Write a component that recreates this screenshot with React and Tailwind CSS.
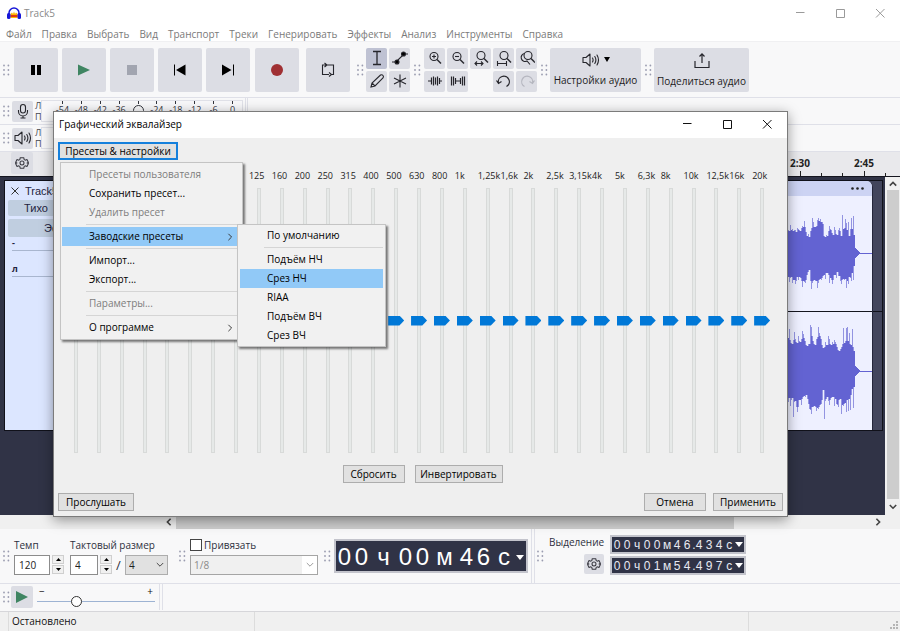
import React from "react";

const MENU = ["Файл", "Правка", "Выбрать", "Вид", "Транспорт", "Треки", "Генерировать", "Эффекты", "Анализ", "Инструменты", "Справка"];

const BANDS = ["20", "25", "31", "40", "50", "63", "80", "100", "125", "160", "200", "250", "315", "400", "500", "630", "800", "1k", "1,25k", "1,6k", "2k", "2,5k", "3,15k", "4k", "5k", "6,3k", "8k", "10k", "12,5k", "16k", "20k"];

const METER = ["-54", "-48", "-42", "-36", "", "-24", "-18", "-12", "-6", "0"];

// Peak heights of each channel, one value per pixel column.
const LEFT_UP = [32, 33, 25, 23, 22, 28, 23, 24, 22, 23, 23, 21, 25, 24, 23, 22, 25, 27, 26, 32, 26, 21, 17, 19, 16, 22, 25, 35, 31, 26, 26, 27, 33, 35, 32, 34, 31, 31, 29, 17, 16, 18, 17, 22, 27, 24, 23, 20, 18, 26, 23, 19, 18, 23, 25, 22, 17, 38, 24, 25, 34, 30, 23, 31, 17, 24, 35, 24, 37, 18];
const LEFT_DOWN = [22, 31, 25, 24, 29, 25, 24, 30, 27, 27, 31, 28, 24, 27, 24, 25, 28, 34, 28, 29, 30, 27, 22, 19, 17, 28, 36, 30, 28, 27, 28, 28, 35, 30, 27, 26, 27, 25, 23, 22, 26, 20, 20, 22, 30, 25, 27, 31, 27, 22, 22, 25, 19, 23, 23, 28, 31, 27, 26, 27, 26, 35, 28, 31, 24, 25, 28, 20, 27, 13];
const RIGHT_UP = [40, 37, 34, 33, 42, 31, 28, 27, 31, 39, 32, 29, 28, 35, 30, 29, 32, 40, 37, 33, 30, 26, 25, 27, 27, 46, 44, 35, 30, 27, 26, 32, 34, 44, 38, 35, 32, 26, 23, 24, 29, 26, 26, 35, 32, 27, 26, 29, 27, 31, 29, 27, 24, 21, 20, 22, 24, 27, 43, 28, 30, 43, 44, 30, 38, 27, 26, 42, 24, 20];
const RIGHT_DOWN = [29, 27, 37, 31, 27, 35, 29, 27, 46, 31, 30, 36, 41, 36, 29, 29, 34, 28, 26, 25, 26, 24, 28, 33, 38, 39, 43, 36, 36, 35, 36, 40, 37, 38, 36, 34, 33, 29, 19, 48, 30, 28, 26, 30, 34, 29, 27, 26, 26, 35, 28, 33, 34, 36, 29, 28, 43, 34, 35, 33, 32, 41, 29, 40, 28, 39, 24, 18, 37, 16];

function Grip() {
  return (
    <svg width="8" height="12" viewBox="0 0 8 12" className="shrink-0 text-[#9a9cb0]" fill="currentColor" aria-hidden="true">
      <circle cx="2" cy="1.5" r="0.9" /><circle cx="6.4" cy="1.5" r="0.9" />
      <circle cx="2" cy="6" r="0.9" /><circle cx="6.4" cy="6" r="0.9" />
      <circle cx="2" cy="10.5" r="0.9" /><circle cx="6.4" cy="10.5" r="0.9" />
    </svg>
  );
}

function Big({ label, children, className = "" }) {
  return (
    <button aria-label={label} className={`flex size-11 shrink-0 items-center justify-center rounded-xs bg-[#dcdde4] ${className}`}>
      <svg width="16" height="16" viewBox="0 0 16 16" fill="none">{children}</svg>
    </button>
  );
}

function Small({ label, active, children }) {
  return (
    <button aria-label={label} className={`flex size-[21px] shrink-0 items-center justify-center rounded-xs ${active ? "bg-[#bfc2d3]" : "bg-[#dcdde4]"}`}>
      <svg width="16" height="16" viewBox="0 0 16 16" fill="none" stroke="#26262c" strokeWidth="1.1">{children}</svg>
    </button>
  );
}

function Gear() {
  return (
    <svg width="14" height="14" viewBox="0 0 24 24" fill="none" stroke="#3a3a42" strokeWidth="1.8" strokeLinejoin="round" aria-hidden="true">
      <path d="M9 3h6l.8 3.2 1.600.9 3.100-1L23 11l-2.300 1L23 13l-2.500 4.900-3.100-1-1.600.9L15 21H9l-.8-3.200-1.600-.9-3.100 1L1 13l2.300-1L1 11l2.500-4.900 3.100 1 1.600-.9z" />
      <circle cx="12" cy="12" r="3.400" />
    </svg>
  );
}

function Speaker() {
  return (
    <svg width="18" height="16" viewBox="0 0 18 16" fill="none" stroke="#26262c" strokeWidth="1.1" strokeLinecap="round" aria-hidden="true">
      <path d="M1 5.500h3l4-3.500v12l-4-3.500H1z" strokeLinejoin="round" />
      <path d="M10.500 6q1.200 2 0 4M12.800 4.500q2.200 3.500 0 7M15 3q3 5 0 10" />
    </svg>
  );
}

function Chevron({ dir = "down", color = "#444", size = 8, weight = 1.2 }) {
  const paths = { down: "M1 2.500 5 6.500 9 2.500", up: "M1 7 5 3 9 7", left: "M7 1 3 5 7 9", right: "M3 1 7 5 3 9" };
  return (
    <svg width={size} height={size} viewBox="0 0 10 10" fill="none" stroke={color} strokeWidth={weight} className="shrink-0" aria-hidden="true">
      <path d={paths[dir]} />
    </svg>
  );
}

function WindowButtons({ color }) {
  return (
    <div className="flex items-center gap-[30px]">
      <button aria-label="Свернуть"><svg width="10" height="10" viewBox="0 0 10 10" stroke={color}><path d="M1 4.500h8.500" /></svg></button>
      <button aria-label="Развернуть"><svg width="10" height="10" viewBox="0 0 10 10" stroke={color} fill="none"><path d="M1.500 1.500h8v8h-8z" /></svg></button>
      <button aria-label="Закрыть"><svg width="10" height="10" viewBox="0 0 10 10" stroke={color}><path d="M1 1l8.500 8.500M9.500 1 1 9.500" /></svg></button>
    </div>
  );
}

function Lens({ cx = 8, cy = 6.5, r = 4 }) {
  return <><circle cx={cx} cy={cy} r={r} /><path d={`M${cx + 3} ${cy + 3}l4 4`} strokeWidth="1.4" /></>;
}

function Toolbar() {
  return (
    <div className="flex h-14 items-center border-b border-[#dfe0e8] pl-0.5">
      <Grip />
      <div className="ml-1 flex gap-1">
        <Big label="Пауза"><path d="M3 3h4v10H3zM9 3h4v10H9z" fill="#000" /></Big>
        <Big label="Воспроизвести"><path d="M2 2.500 14 8 2 13.500z" fill="#3f8562" /></Big>
        <Big label="Остановить"><path d="M3 3h10v10H3z" fill="#a2a5b0" /></Big>
        <Big label="К началу"><path d="M2.500 2.500v11" stroke="#000" /><path d="M13.500 2.500v11L4 8z" fill="#000" /></Big>
        <Big label="К концу"><path d="M13.500 2.500v11" stroke="#000" /><path d="M2 2.500v11L11.500 8z" fill="#000" /></Big>
      </div>
      <Big label="Запись" className="ml-[5px]"><circle cx="8" cy="8" r="6" fill="#a03033" /></Big>
      <Big label="Цикл" className="mr-1 ml-[7px]">
        <path d="M6 3H2.500v9.500H9M7 3h6.500v9.500H12M4.500 1l2.500 2-2.500 2M9 10.500l2.500 2L9 14.500" stroke="#26262c" strokeWidth="1.1" />
      </Big>
      <div className="ml-0.5"><Grip /></div>
      <div className="ml-0.5 grid grid-cols-2 gap-0.5">
        <Small label="Выделение" active><path d="M4 1.500h8M4 14.500h8M8 1.500v13" strokeWidth="1.3" /></Small>
        <Small label="Огибающая"><path d="M0 12h4l8-8h4" strokeWidth="1.2" /><circle cx="5" cy="12" r="2" fill="#000" /><circle cx="11.500" cy="4" r="2" fill="#000" /></Small>
        <Small label="Карандаш"><path d="M2 14l1-4 8.500-8q1.500-.8 2.500.5t0 2.300L6 13zM3 10l3 3" /></Small>
        <Small label="Мультиинструмент"><path d="M8 1.500v13M2 5l12 6M14 5 2 11" /></Small>
      </div>
      <div className="ml-[3px]"><Grip /></div>
      <div className="ml-[3px] grid grid-cols-5 gap-0.5">
        <Small label="Увеличить"><Lens cx={7} /><path d="M5 6.500h4M7 4.500v4" /></Small>
        <Small label="Уменьшить"><Lens cx={7} /><path d="M5 6.500h4" /></Small>
        <Small label="По выделению"><Lens cx={8} cy={5.5} /><path d="M2 13.500h8M4 11.500l-2 2 2 2M8 11.500l2 2-2 2" /></Small>
        <Small label="По ширине"><Lens cx={8} cy={5.5} /><path d="M1.500 13.500h9M1.500 11v5M10.500 11v5" /></Small>
        <Small label="Переключить масштаб"><Lens cx={9} cy={5.5} /><path d="M5.500 3.500A4 4 0 1 0 8 11l3 3.500" /></Small>
        <Small label="Обрезать"><path d="M1 8h3M12 8h3M4.500 4.500v7M6.500 3.500v9M8.500 4.500v7M10.500 3.500v9M12.500 5v6" strokeWidth="1.2" /></Small>
        <Small label="Тишина"><path d="M1.500 3.500v9M3.500 3.500v9M5.500 5v6M5.500 8h5M10.500 5v6M12.500 3.500v9M14.500 3.500v9" strokeWidth="1.2" /></Small>
        <span />
        <Small label="Отменить"><path d="M2.500 10A5.500 5.500 0 1 1 10.500 13.500M.5 7.500 2.500 10.500l3-2" strokeWidth="1.2" /></Small>
        <Small label="Повторить"><g stroke="#b5b6bf"><path d="M13.500 10A5.500 5.500 0 1 0 5.500 13.500M15.500 7.500 13.500 10.500l-3-2" strokeWidth="1.2" /></g></Small>
      </div>
      <div className="ml-[3px]"><Grip /></div>
      <button className="ml-0.5 flex h-11 w-[91px] shrink-0 flex-col items-center justify-between rounded-xs bg-[#dcdde4] pt-1 pb-[5px] text-[10px]/[13px] whitespace-nowrap text-[#1c1c22]">
        <span className="flex items-center gap-1"><Speaker /><svg width="6" height="5" viewBox="0 0 6 5"><path d="M0 0h6L3 5z" /></svg></span>
        Настройки аудио
      </button>
      <div className="ml-[3px]"><Grip /></div>
      <button className="ml-0.5 flex h-11 w-[95px] shrink-0 flex-col items-center justify-between rounded-xs bg-[#dcdde4] pt-1 pb-1 text-[10px]/[13px] whitespace-nowrap text-[#1c1c22]">
        <svg width="16" height="18" viewBox="0 0 16 18" fill="none" stroke="#26262c" strokeWidth="1.2"><path d="M1 9v6.500h14V9M8 11V2M5.500 4.500 8 1.800l2.500 2.700" /></svg>
        Поделиться аудио
      </button>
    </div>
  );
}

function MeterRow({ icon, label, children }) {
  return (
    <div className="flex h-[27px] items-center border-b border-[#dfe0e8] pl-0.5">
      <Grip />
      <button aria-label={label} className="ml-0.5 flex size-[21px] items-center justify-center rounded-xs bg-[#dcdde4]">{icon}</button>
      <div className="ml-0.5 flex w-[6px] flex-col text-[9px]/[11px] text-[#44464f]"><span>Л</span><span>П</span></div>
      {children}
    </div>
  );
}

function Meters() {
  return (
    <>
      <MeterRow label="Уровень записи" icon={
        <svg width="14" height="16" viewBox="0 0 14 16" fill="none" stroke="#26262c" strokeWidth="1.1"><rect x="4.500" y="1.500" width="5" height="8.500" rx="2.500" /><path d="M2.500 7v1.500a4.500 4.500 0 0 0 9 0V7M7 13v2M4.500 15h5" /></svg>
      }>
        <div className="grid h-[22px] w-[202px] grid-cols-10 border border-[#e0e1e8] bg-[#f8f8fa] pl-[11px] text-[9px]/[11px] text-[#33353d]">
          {METER.map((m, i) => (
            <div key={i} className="flex flex-col items-center">
              <span className="h-[3px] w-px shrink-0 bg-[#33353d]" />
              {m ? <span>{m}</span> : <span className="mt-px size-[11px] shrink-0 rounded-full border border-[#33353d]" />}
            </div>
          ))}
        </div>
        <div className="ml-0.5 h-full w-[3px] border-x border-[#dfe0e8]" />
      </MeterRow>
      <MeterRow label="Уровень воспроизведения" icon={<Speaker />}>
        <div className="h-[22px] w-[202px] border border-[#e0e1e8]" />
      </MeterRow>
    </>
  );
}

function Ruler() {
  return (
    <div className="flex h-[25px] items-stretch border-b border-[#15161f] bg-[#e9e9ec]">
      <div className="flex w-[53px] items-start pl-[11px]">
        <button aria-label="Параметры шкалы" className="flex size-[22px] items-center justify-center rounded-xs bg-[#dcdde4]"><Gear /></button>
      </div>
      <div className="flex-1" />
      <div className="mr-1 flex h-full">
        {["2:15", "2:30", "2:45"].map((t) => (
          <div key={t} className="flex w-16 flex-col items-center justify-between">
            <span className="mt-1 text-[10px]/[14px] font-bold text-[#222]">{t}</span>
            <svg width="64" height="5" viewBox="0 0 64 5" stroke="#222"><path d="M10.500 2v3M32.500 0v5M53.500 2v3" /></svg>
          </div>
        ))}
      </div>
    </div>
  );
}

const outline = (peaks, mid, sign) => `M0 ${mid}${peaks.map((v, i) => `V${mid + sign * v}H${i + 1}`).join("")}V${mid}Z`;
const trough = (peaks) => peaks.map((v, i) => Math.min(v, peaks[i - 1] ?? v, peaks[i + 1] ?? v));

function Wave({ up, down, height, mid }) {
  return (
    <svg width="91" height={height} viewBox={`0 0 91 ${height}`} className="block" fill="#6363d2" shapeRendering="crispEdges">
      <g transform="translate(4 0)">
        <g opacity="0.65"><path d={outline(up, mid, -1)} /><path d={outline(down, mid, 1)} /></g>
        <path d={outline(trough(up), mid, -1)} />
        <path d={outline(trough(down), mid, 1)} />
        <path d={`M69 ${mid - 7}L75 ${mid}L69 ${mid + 7}Z`} />
      </g>
      <path d={`M78 ${mid + 0.5}H91`} stroke="#6363d2" />
    </svg>
  );
}

function Tracks() {
  return (
    <div className="flex flex-1 bg-[#303346]">
      <div className="min-w-0 flex-1 py-[3px] pr-0.5 pl-1">
        <div className="flex border border-[#10111a] bg-[#42455c]">
          <div className="w-[100px] shrink-0 bg-[#dce6ff] pt-px text-[#1f2440]">
            <div className="flex h-[18px] items-center gap-1.5 px-1.5 font-[Liberation_Sans] text-[11px]">
              <button aria-label="Закрыть трек"><svg width="8" height="8" viewBox="0 0 8 8" stroke="#333"><path d="M.5.5l7 7M7.500.5l-7 7" /></svg></button>
              Track5
            </div>
            <div className="flex flex-col gap-[3px] px-[3px] font-[Liberation_Sans] text-[11px]/[18px]">
              <button className="h-4 rounded-xs bg-[#c0cee0] pl-4 text-left leading-4">Тихо</button>
              <button className="h-[18px] rounded-xs bg-[#c0cee0] pl-9 text-left">Эффекты</button>
            </div>
            <div className="flex flex-col gap-3 px-[7px] text-[9px]/[11px] font-bold">
              <div className="h-[14px] border-b border-[#a9b6cf]">-</div>
              <div className="h-[14px] border-b border-[#a9b6cf]">л</div>
            </div>
          </div>
          <div className="min-w-0 flex-1" />
          <div className="w-[92px] shrink-0 overflow-hidden rounded-tr-md border-r border-[#23253a] bg-[#eef0ff]">
            <div className="flex h-[15px] items-center justify-end bg-[#ccd3f3] pr-2">
              <svg width="13" height="3" viewBox="0 0 13 3" fill="#222"><circle cx="1.500" cy="1.500" r="1.300" /><circle cx="6.500" cy="1.500" r="1.300" /><circle cx="11.500" cy="1.500" r="1.300" /></svg>
            </div>
            <Wave up={LEFT_UP} down={LEFT_DOWN} height={115} mid={57} />
            <div className="h-px bg-[#15161f]" />
            <Wave up={RIGHT_UP} down={RIGHT_DOWN} height={118} mid={59} />
          </div>
          <div className="flex w-[9px] shrink-0 flex-col pt-[130px]"><div className="h-px bg-[#10111a]" /></div>
        </div>
      </div>
      <div className="flex w-[15px] flex-col items-center bg-[#f0f0f0]">
        <div className="flex h-[13px] items-center"><Chevron dir="up" weight={2} /></div>
        <div className="w-3 flex-1 bg-[#cdcdcd]" />
        <div className="flex h-4 items-center"><Chevron dir="down" weight={2} /></div>
      </div>
    </div>
  );
}

function Spinner({ id, value, width }) {
  return (
    <div className="flex gap-0.5">
      <input id={id} defaultValue={value} className={`h-5 border border-[#8c8c8c] bg-white pl-1 text-[10px] text-[#222] ${width}`} />
      <div className="flex flex-col gap-px">
        {["M0 3h5L2.500 0z", "M0 0h5L2.500 3z"].map((d, i) => (
          <button key={i} aria-label={i ? "Уменьшить" : "Увеличить"} className="flex h-[9px] w-3 items-center justify-center border border-[#cfcfcf] bg-[#f0f0f0]">
            <svg width="5" height="3" viewBox="0 0 5 3"><path d={d} /></svg>
          </button>
        ))}
      </div>
    </div>
  );
}

function SmallTime({ text, label }) {
  return (
    <div role="group" aria-label={label} className="flex h-[19px] items-center border-2 border-[#c3c4cc] bg-[#303346] pr-px font-[Liberation_Sans] text-[12px] text-[#e8eaf2]">
      {text.split("").map((c, i) => <span key={i} className={`text-center ${c === "." ? "w-0.5" : "w-[10px]"}`}>{c}</span>)}
      <button aria-label="Формат времени" className="ml-px"><svg width="8" height="5" viewBox="0 0 8 5" fill="#fff"><path d="M0 0h8L4 5z" /></svg></button>
    </div>
  );
}

function BottomBar() {
  const clock = [["00", "ч"], ["00", "м"], ["46", "с"]];
  return (
    <div className="flex h-[55px] items-center border-b border-[#dfe0e8] pl-0.5 text-[10px]/[14px] text-[#2e3040]">
      <Grip />
      <div className="ml-1 flex flex-col gap-[3px]">
        <label htmlFor="tempo">Темп</label>
        <Spinner id="tempo" value="120" width="w-9" />
      </div>
      <div className="ml-1.5 flex flex-col gap-[3px]">
        <label htmlFor="beats" className="whitespace-nowrap">Тактовый размер</label>
        <div className="flex items-center">
          <Spinner id="beats" value="4" width="w-7" />
          <span className="w-[13px] text-center text-[13px]">/</span>
          <div className="relative">
            <select aria-label="Доля" className="block h-5 w-[43px] appearance-none border border-[#adadad] bg-[#e1e1e1] pl-[3px] text-[10px] text-[#222]"><option>4</option></select>
            <span className="pointer-events-none absolute top-[6px] right-1"><Chevron /></span>
          </div>
        </div>
      </div>
      <div className="ml-2.5"><Grip /></div>
      <div className="ml-1 flex flex-col gap-[3px]">
        <label className="flex items-center gap-0.5 whitespace-nowrap"><input type="checkbox" className="size-3 appearance-none border border-[#444] bg-white" />Привязать</label>
        <div className="relative">
          <select disabled aria-label="Привязка" className="block h-5 w-32 appearance-none border border-[#a5a5a5] bg-[#f0f0f0] pl-[3px] text-[10px] text-[#8a8a8a] opacity-100"><option>1/8</option></select>
          <span className="pointer-events-none absolute top-px right-px flex h-[18px] w-[15px] items-center justify-center bg-white"><Chevron color="#999" /></span>
        </div>
      </div>
      <div className="ml-[5px]"><Grip /></div>
      <div role="group" aria-label="Время" className="ml-[3px] flex h-[34px] w-[194px] shrink-0 items-center border-2 border-[#c3c4cc] bg-[#303346] pt-0.5 font-[Liberation_Sans] text-2xl text-white">
        {clock.map(([n, u]) => (
          <React.Fragment key={u}>
            {n.split("").map((d, i) => <span key={i} className="w-[17px] text-center">{d}</span>)}
            <span className="w-[27px] text-center last-of-type:w-6">{u}</span>
          </React.Fragment>
        ))}
        <button aria-label="Формат времени"><svg width="8" height="5" viewBox="0 0 8 5" fill="#fff"><path d="M0 0h8L4 5z" /></svg></button>
      </div>
      <div className="ml-[3px] h-full w-1 border-x border-[#dfe0e8]" />
      <div className="ml-px"><Grip /></div>
      <div className="ml-[5px] flex flex-col items-end gap-[5px] pb-1">
        <span>Выделение</span>
        <button aria-label="Настройки выделения" className="flex size-5 items-center justify-center rounded-xs bg-[#dcdde4]"><Gear /></button>
      </div>
      <div className="ml-1.5 flex flex-col gap-0.5 pb-0.5">
        <SmallTime label="Начало выделения" text="00ч00м46.434с" />
        <SmallTime label="Конец выделения" text="00ч01м54.497с" />
      </div>
    </div>
  );
}

function SpeedBar() {
  return (
    <div className="flex h-7 items-center border-b border-[#d6d6da] pb-px pl-0.5">
      <Grip />
      <button aria-label="Воспроизвести с заданной скоростью" className="ml-px flex size-[22px] items-center justify-center rounded-xs bg-[#dcdde4]">
        <svg width="14" height="14" viewBox="0 0 14 14"><path d="M1 1l12 6-12 6z" fill="#3f8562" /></svg>
      </button>
      <div className="ml-1 flex w-[118px] flex-col">
        <div className="flex justify-between px-0.5 text-[10px]/[8px] text-[#111]" aria-hidden="true"><span>−</span><span>+</span></div>
        <input type="range" aria-label="Скорость" min="0" max="100" defaultValue="32" className="h-3 w-full appearance-none bg-transparent [&::-webkit-slider-runnable-track]:h-px [&::-webkit-slider-runnable-track]:bg-[#9db3d3] [&::-webkit-slider-thumb]:-mt-[5px] [&::-webkit-slider-thumb]:size-[11px] [&::-webkit-slider-thumb]:appearance-none [&::-webkit-slider-thumb]:rounded-full [&::-webkit-slider-thumb]:border [&::-webkit-slider-thumb]:border-[#333] [&::-webkit-slider-thumb]:bg-white" />
      </div>
      <div className="ml-1 h-full w-1 border-x border-[#dfe0e8]" />
    </div>
  );
}

const ITEM = "flex h-[19px] w-full items-center justify-between whitespace-nowrap text-left pl-[27px] pr-1";

function Sep() {
  return <li role="separator" className="ml-6 flex h-[5px] items-center"><span className="h-px w-full bg-[#d5d5d5]" /></li>;
}

function Item({ children, disabled, active, arrow }) {
  return (
    <button role="menuitem" disabled={disabled} className={`${ITEM} ${active ? "bg-[#91c9f7]" : ""} ${disabled ? "text-[#7d7d7d]" : "text-black"}`}>
      {children}
      {arrow && <Chevron dir="right" color="#333" />}
    </button>
  );
}

const POPUP = "absolute border border-[#c4c4c4] bg-[#f1f1f1] text-[10px] shadow-[2px_2px_2px_rgba(0,0,0,0.5)]";

function PresetMenu() {
  return (
    <ul role="menu" className={`${POPUP} top-5 left-0.5 z-10 w-[183px] py-0.5 pr-1 pl-px`}>
      <li><Item disabled>Пресеты пользователя</Item></li>
      <li><Item>Сохранить пресет...</Item></li>
      <li><Item disabled>Удалить пресет</Item></li>
      <Sep />
      <li className="relative">
        <Item active arrow>Заводские пресеты</Item>
        <ul role="menu" className={`${POPUP} -top-[3px] right-[-148px] w-[149px] px-0.5 py-px`}>
          <li><Item>По умолчанию</Item></li>
          <Sep />
          <li><Item>Подъём НЧ</Item></li>
          <li><Item active>Срез НЧ</Item></li>
          <li><Item>RIAA</Item></li>
          <li><Item>Подъём ВЧ</Item></li>
          <li><Item>Срез ВЧ</Item></li>
        </ul>
      </li>
      <Sep />
      <li><Item>Импорт...</Item></li>
      <li><Item>Экспорт...</Item></li>
      <Sep />
      <li><Item disabled>Параметры...</Item></li>
      <Sep />
      <li><Item arrow>О программе</Item></li>
    </ul>
  );
}

function DialogButton({ children, className = "" }) {
  return <button className={`h-[18px] border border-[#adadad] bg-[#e1e1e1] text-center text-[10px]/[16px] whitespace-nowrap text-black ${className}`}>{children}</button>;
}

function Equalizer() {
  return (
    <section role="dialog" aria-label="Графический эквалайзер" className="absolute top-[111px] right-[112px] left-[53px] border border-[#7b7b7b] bg-[#efefef] shadow-[0_3px_12px_rgba(0,0,0,0.4)]">
      <header className="flex h-[26px] items-center justify-between bg-white pr-[15px] pb-0.5 pl-[5px] text-[10px] text-black">
        Графический эквалайзер
        <WindowButtons color="#111" />
      </header>
      <div className="relative px-1 pt-1">
        <button className="block h-[18px] w-[120px] border-2 border-[#1580dc] bg-[#e1e1e1] text-center text-[10px]/[14px] text-black">Пресеты &amp; настройки</button>
        <div className="absolute top-1 left-1"><PresetMenu /></div>
      </div>
      <div className="mt-[9px] grid grid-cols-[repeat(31,minmax(0,1fr))] pr-[14px] pl-[10px]">
        {BANDS.map((b) => (
          <div key={b} className="flex flex-col">
            <label htmlFor={`band-${b}`} className="pl-0.5 text-[9px]/[14px] whitespace-nowrap text-[#222]">{b}</label>
            <input
              id={`band-${b}`}
              type="range"
              min="-20"
              max="20"
              defaultValue="0"
              className="mt-[5px] ml-1 h-[265px] w-4 appearance-none bg-transparent [direction:rtl] [writing-mode:vertical-lr] [&::-webkit-slider-runnable-track]:mx-auto [&::-webkit-slider-runnable-track]:w-1 [&::-webkit-slider-runnable-track]:border [&::-webkit-slider-runnable-track]:border-[#d8dad9] [&::-webkit-slider-runnable-track]:bg-[#e6e9e8] [&::-webkit-slider-thumb]:-ml-[7px] [&::-webkit-slider-thumb]:h-[10px] [&::-webkit-slider-thumb]:w-4 [&::-webkit-slider-thumb]:appearance-none [&::-webkit-slider-thumb]:bg-[#0078d7] [&::-webkit-slider-thumb]:[clip-path:polygon(0_0,70%_0,100%_50%,70%_100%,0_100%)]"
            />
          </div>
        ))}
      </div>
      <div className="mt-3 flex justify-center gap-2.5 pl-1">
        <DialogButton className="w-[62px]">Сбросить</DialogButton>
        <DialogButton className="w-[88px]">Инвертировать</DialogButton>
      </div>
      <div className="mt-[10px] flex gap-[7px] px-1 pb-[5px]">
        <DialogButton className="mr-auto w-[76px]">Прослушать</DialogButton>
        <DialogButton className="w-[62px]">Отмена</DialogButton>
        <DialogButton className="w-[70px]">Применить</DialogButton>
      </div>
    </section>
  );
}

export default function App() {
  return (
    <div className="relative flex min-h-screen flex-col overflow-hidden bg-[#f8f8f9] font-['Open_Sans','Noto_Sans',sans-serif]">
      <header className="flex h-[26px] items-center justify-between bg-white pr-[15px] pl-[7px] text-[10px] text-[#8a8a8a]">
        <span className="flex items-center gap-[3px]">
          <svg width="14" height="13" viewBox="0 0 14 13" fill="none">
            <path d="M2 8V6a5 5 0 0 1 10 0v2" stroke="#1717d8" strokeWidth="1.5" />
            <path d="M3.500 7 5 5.500 6 7l1-2.500L8 7l1-1.500L10.500 7v4h-7z" fill="#ffb600" />
            <path d="M3.500 8h7v2h-7z" fill="#e03a10" />
            <rect x="0" y="6" width="3.500" height="6" rx="1.500" fill="#1717d8" /><rect x="10.500" y="6" width="3.500" height="6" rx="1.500" fill="#1717d8" />
          </svg>
          Track5
        </span>
        <WindowButtons color="#9a9a9a" />
      </header>
      <nav className="flex h-4 items-center gap-2.5 border-b border-[#f0f0f2] bg-white pl-1.5 text-[10px]/[14px] text-[#7a7a7a]">
        {MENU.map((m) => <button key={m}>{m}</button>)}
      </nav>
      <Toolbar />
      <Meters />
      <Ruler />
      <Tracks />
      <div className="flex h-[14px] items-center bg-[#f0f0f0] pr-[18px] pl-[165px]">
        <Chevron dir="left" weight={2} />
        <div className="flex h-full flex-1 pl-[3px]"><div className="h-full w-4/5 bg-[#cdcdcd]" /></div>
        <Chevron dir="right" weight={2} />
      </div>
      <BottomBar />
      <SpeedBar />
      <footer className="flex h-[19px] items-stretch bg-[#f0f0f0] pl-2 text-[10px] text-[#111]">
        <div className="flex w-[247px] items-center border-x border-[#dcdcdc] pl-[3px]">Остановлено</div>
        <div className="flex-1" />
        <div className="flex w-[152px] items-end justify-end border-l border-[#dcdcdc] p-0.5">
          <svg width="8" height="8" viewBox="0 0 8 8" fill="#b5b5b5"><path d="M6 0h2v2H6zM3 3h2v2H3zM6 3h2v2H6zM0 6h2v2H0zM3 6h2v2H3zM6 6h2v2H6z" /></svg>
        </div>
      </footer>
      <Equalizer />
    </div>
  );
}
